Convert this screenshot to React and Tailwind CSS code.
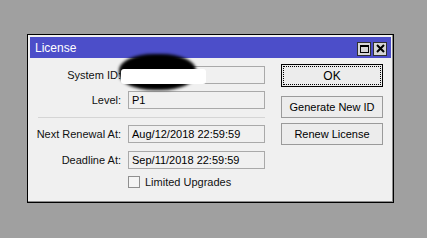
import React from "react";

function Field({ label, value }) {
  return (
    <div className="flex items-center h-[18px]">
      <div className="w-[91px] text-right text-[11px] leading-none text-[#111]">{label}</div>
      <div className="ml-[7px] w-[137px] h-[18px] border border-[#a9a9a9] bg-[#f0f0f0] flex items-center pl-[3px] text-[11px] leading-none text-black">
        {value}
      </div>
    </div>
  );
}

function TitleButton({ children }) {
  return (
    <div className="w-[14px] h-[14px] border border-[#303030] bg-[#d6d6d6] flex items-center justify-center">
      {children}
    </div>
  );
}

export default function App() {
  return (
    <div className="w-[427px] h-[238px] bg-[#a0a0a0] pl-[27px] pt-[34px] font-['Liberation_Sans',Arial,sans-serif]">
      <div className="relative w-[367px] h-[169px] border border-black bg-[#f0f0f0] pt-[2px] pl-[2px] pr-[2px] shadow-[inset_-1px_-1px_0_#8c8c8c] flex flex-col">
        {/* barra de título */}
        <div className="h-[21px] bg-[#4c4ec9] flex items-center pl-[5px] pr-[4px]">
          <span className="text-white text-[12px] leading-none">License</span>
          <div className="ml-auto flex gap-[2px] mt-[2px]">
            <TitleButton>
              <div className="w-[9px] h-[8px] border border-black border-t-2" />
            </TitleButton>
            <TitleButton>
              <svg width="9" height="9" viewBox="0 0 9 9">
                <path d="M1 1 L8 8 M8 1 L1 8" stroke="black" strokeWidth="2" />
              </svg>
            </TitleButton>
          </div>
        </div>

        <div className="flex flex-1">
          <div className="flex flex-col pt-[8px]">
            <Field label="System ID:" value="" />
            <div className="mt-[7px]">
              <Field label="Level:" value="P1" />
            </div>
            <div className="ml-[8px] w-[227px] h-px bg-[#d5d5d5] mt-[8px]" />
            <div className="mt-[7px]">
              <Field label="Next Renewal At:" value="Aug/12/2018 22:59:59" />
            </div>
            <div className="mt-[8px]">
              <Field label="Deadline At:" value="Sep/11/2018 22:59:59" />
            </div>
            <div className="mt-[7px] ml-[98px] flex items-center h-[12px]">
              <div className="w-[12px] h-[12px] border border-[#8f8f8f] bg-[#f4f4f4]" />
              <span className="ml-[5px] text-[11px] leading-none text-[#111]">Limited Upgrades</span>
            </div>
          </div>

          <div className="ml-[16px] flex flex-col pt-[6px] w-[102px]">
            <button className="h-[23px] border border-black bg-[#ececec] p-[1px]">
              <div className="h-full border border-dotted border-black flex items-center justify-center text-[12px] leading-none text-black">
                OK
              </div>
            </button>
            <button className="mt-[9px] h-[22px] border border-[#9a9a9a] bg-[#ececec] flex items-center justify-center text-[11px] leading-none text-black">
              Generate New ID
            </button>
            <button className="mt-[5px] h-[22px] border border-[#9a9a9a] bg-[#ececec] flex items-center justify-center text-[11px] leading-none text-black">
              Renew License
            </button>
          </div>
        </div>

        {/* tachado del System ID */}
        <div className="absolute left-[91px] top-[19px] w-[77px] h-[36px] bg-black rounded-[45%] blur-[1.5px]" />
        <div className="absolute left-[93px] top-[34px] w-[85px] h-[15px] bg-white rounded-[3px] blur-[0.5px]" />
      </div>
    </div>
  );
}
